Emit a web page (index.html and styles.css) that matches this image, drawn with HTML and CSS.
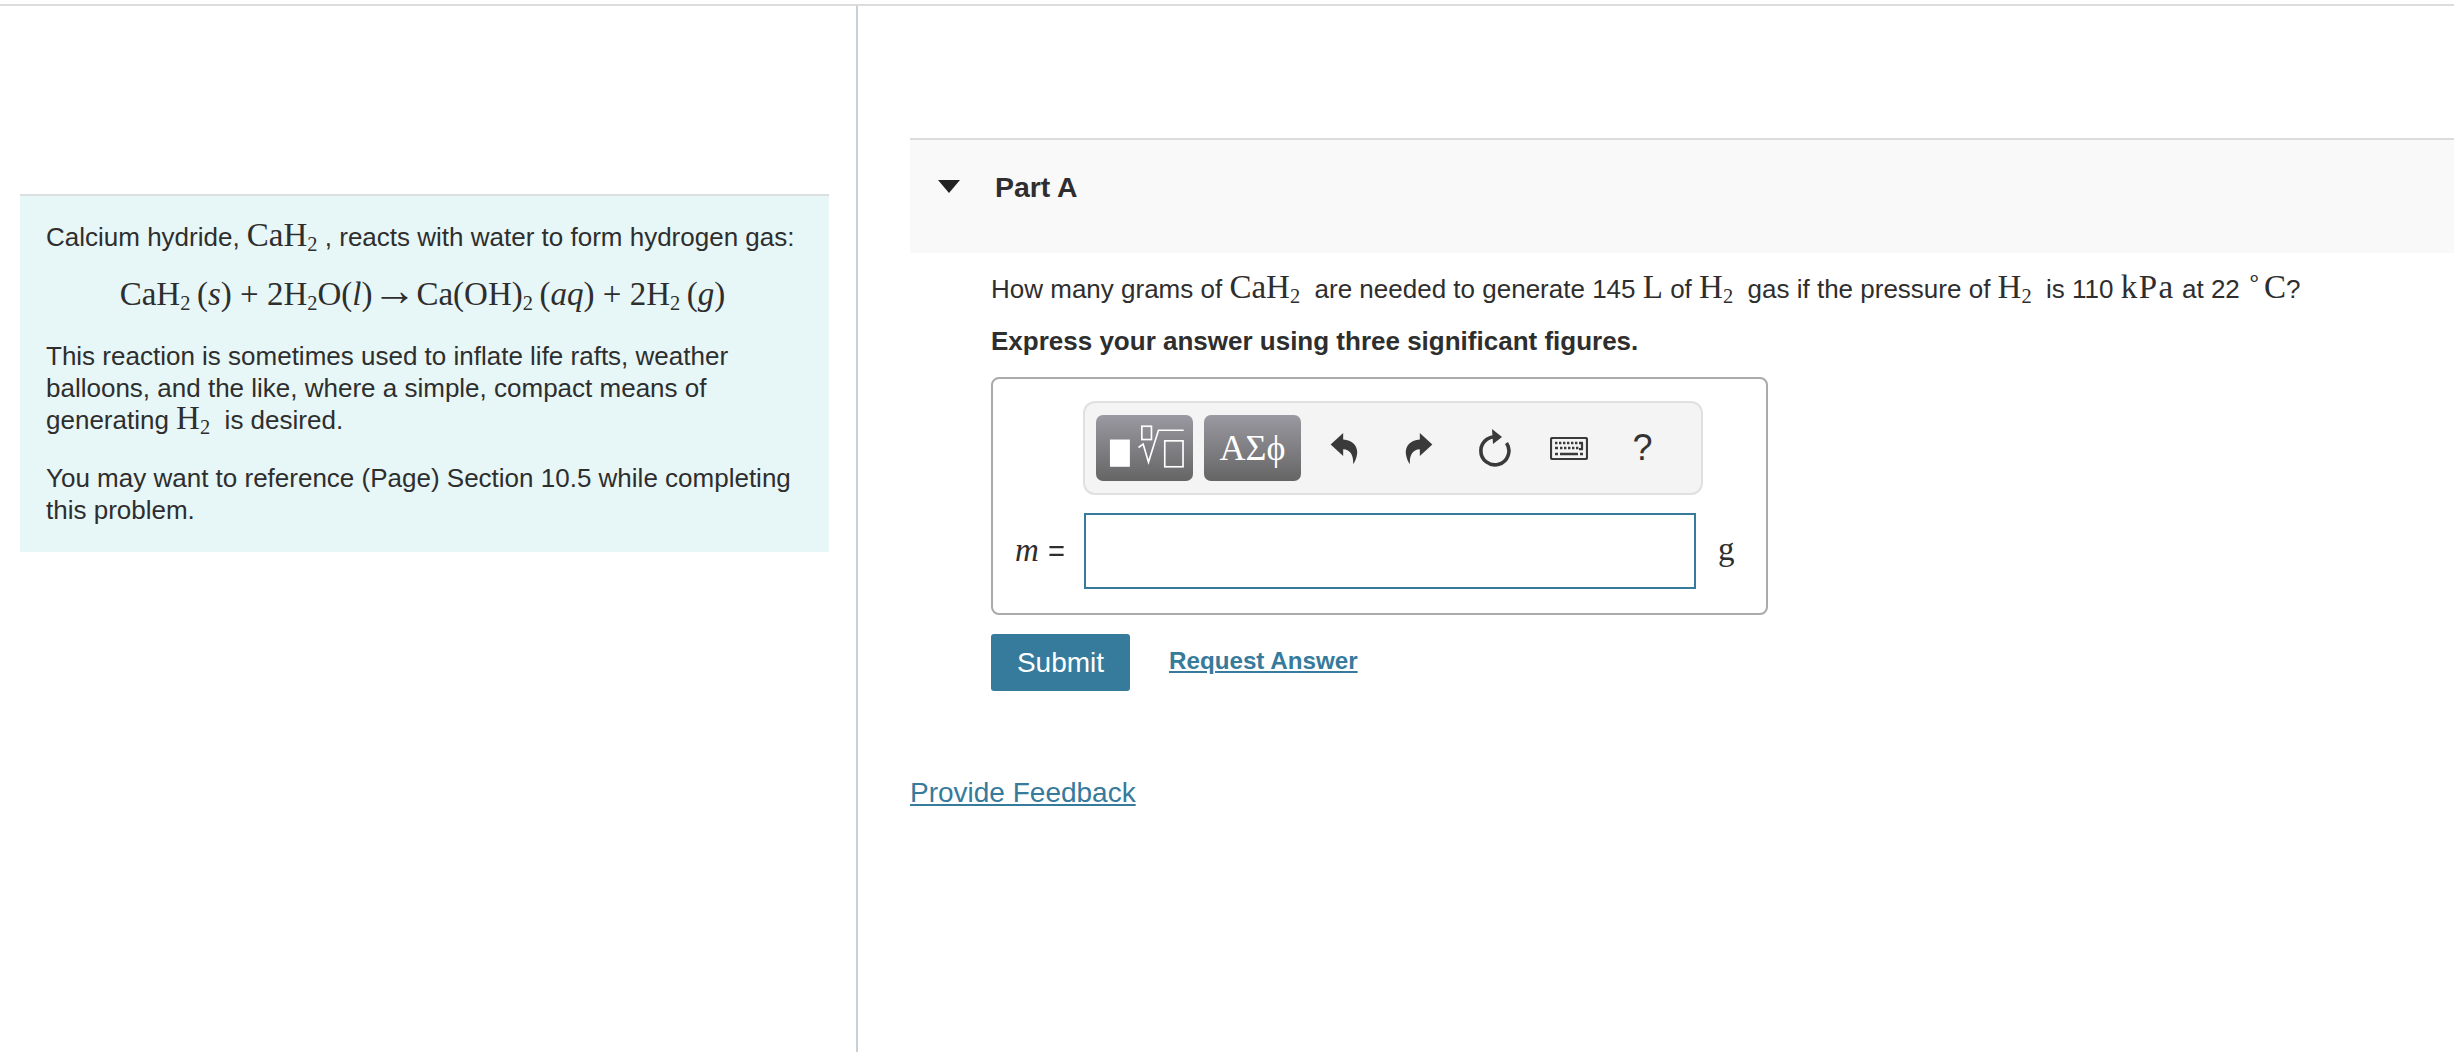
FILE: index.html
```html
<!DOCTYPE html>
<html lang="en">
<head>
    <meta charset="UTF-8">
    <title>Part A</title>
    <link rel="stylesheet" href="styles.css">
</head>
<body>
    <div class="page">
        <aside class="intro-col">
            <div class="intro">
                <p>Calcium hydride, <span class="math">CaH<sub>2</sub></span> , reacts with water to form hydrogen gas:</p>
                <p class="equation"><span class="math">CaH<sub>2</sub>&#8201;(<i>s</i>) + 2H<sub>2</sub>O(<i>l</i>)<span class="arrow">→</span>Ca(OH)<sub>2</sub>&#8201;(<i>aq</i>) + 2H<sub>2</sub>&#8201;(<i>g</i>)</span></p>
                <p>This reaction is sometimes used to inflate life rafts, weather balloons, and the like, where a simple, compact means of generating <span class="math">H<sub>2</sub></span>&nbsp; is desired.</p>
                <p class="last">You may want to reference (Page) Section 10.5 while completing this problem.</p>
            </div>
        </aside>

        <main class="content">
            <div class="part-header">
                <span class="caret"></span>
                <h2>Part A</h2>
            </div>

            <div class="part-body">
                <p class="question">How many grams of <span class="math">CaH<sub>2</sub></span>&nbsp; are needed to generate 145 <span class="math">L</span> of <span class="math">H<sub>2</sub></span>&nbsp; gas if the pressure of <span class="math">H<sub>2</sub></span>&nbsp; is 110 <span class="math wide">kPa</span> at 22 <span class="math"><sup>∘</sup>C</span>?</p>
                <p class="instruction">Express your answer using three significant figures.</p>

                <div class="answer-box">
                    <div class="toolbar">
                        <button class="tool-btn" type="button">
                            <svg class="templates" viewBox="48 45 292 197">
                                <rect x="90" y="118" width="60" height="82" fill="#fff"/>
                                <g fill="none" stroke="#fff" stroke-width="5">
                                    <rect x="186" y="78" width="29" height="40"/>
                                    <path d="M176 142 L190 132 L206 186 L236 90 H312"/>
                                    <rect x="255" y="122" width="55" height="78"/>
                                </g>
                            </svg>
                        </button>
                        <button class="tool-btn symbols" type="button">ΑΣϕ</button>

                        <span class="tool-icon">
                            <svg width="28" height="33" viewBox="60 60 85 100"><path class="ico" d="M62 98 L100 63 V83 C130 85 146 105 142 128 C140 142 135 150 130 158 C132 135 125 113 100 112 V133 Z"/></svg>
                        </span>
                        <span class="tool-icon">
                            <svg class="flip" width="28" height="33" viewBox="60 60 85 100"><path class="ico" d="M62 98 L100 63 V83 C130 85 146 105 142 128 C140 142 135 150 130 158 C132 135 125 113 100 112 V133 Z"/></svg>
                        </span>
                        <span class="tool-icon">
                            <svg width="34" height="38" viewBox="0 0 34 38">
                                <path d="M22.5 8.6 A14 14 0 1 0 29.5 14" fill="none" stroke="#3a3a3a" stroke-width="3.6"/>
                                <path class="ico" d="M15 0 L25 8 L16 15 Z"/>
                            </svg>
                        </span>
                        <span class="tool-icon">
                            <svg width="38" height="23" viewBox="0 0 38 23">
                                <rect x="1" y="1" width="36" height="21" rx="1.5" fill="none" stroke="#3a3a3a" stroke-width="2.2"/>
                                <path d="M5 6h2.4M9 6h2.4M13 6h2.4M17 6h2.4M21 6h2.4M25 6h2.4M29 6h4M5 11h3M10 11h2.4M14 11h2.4M18 11h2.4M22 11h2.4M26 11h2.4M5 17h3M10 17h18M30 17h3" stroke="#3a3a3a" stroke-width="2.6" fill="none"/>
                                <path d="M32 6v6.2H29" stroke="#3a3a3a" stroke-width="2.2" fill="none"/>
                            </svg>
                        </span>
                        <span class="tool-icon help">?</span>
                    </div>

                    <div class="answer-row">
                        <span class="answer-label"><i class="math">m</i> <span class="equals">=</span></span>
                        <input class="answer-input" type="text" aria-label="m">
                        <span class="math unit">g</span>
                    </div>
                </div>

                <div class="actions">
                    <button class="submit" type="button">Submit</button>
                    <a class="request" href="#">Request Answer</a>
                </div>
            </div>

            <a class="feedback" href="#">Provide Feedback</a>
        </main>
    </div>
</body>
</html>
```

FILE: styles.css
```css
* {
    box-sizing: border-box;
}

body {
    margin: 0;
    background-color: #fff;
    color: #2e2e2e;
    font-family: "Liberation Sans", Arial, sans-serif;
    font-size: 26px;
    line-height: 32px;
}

p {
    margin: 0;
}

.page {
    display: flex;
    height: 1052px;
    border-top: 2px solid #dcdcdc;
    margin-top: 4px;
    overflow: hidden;
}

/* columna izquierda */
.intro-col {
    flex: 0 0 858px;
    padding: 188px 27px 0 20px;
    border-right: 2px solid #c8d0d8;
}

.intro {
    height: 358px;
    padding: 25px 26px 0;
    background-color: #e7f6f6;
    border-top: 2px solid #dcdfdf;
}

.intro p {
    margin-bottom: 26px;
}

.intro .equation {
    margin-top: 27px;
    margin-bottom: 28px;
    padding-right: 4px;
    text-align: center;
}

.math {
    font-family: "Liberation Serif", "Times New Roman", serif;
    font-size: 33px;
    line-height: 0;
}

.math sub {
    font-size: 0.62em;
    line-height: 0;
    vertical-align: -0.25em;
}

.math sup {
    font-size: 0.7em;
    line-height: 0;
    vertical-align: 0.5em;
    margin-right: 3px;
}

.math .arrow {
    font-size: 44px;
}

.wide {
    letter-spacing: 1.5px;
}

/* columna derecha */
.content {
    flex: 1;
    min-width: 0;
    padding: 132px 0 0 52px;
}

.part-header {
    display: flex;
    align-items: flex-start;
    height: 115px;
    padding: 28px 0 0 28px;
    background-color: #f9f9f9;
    border-top: 2px solid #dcdcdc;
}

.caret {
    width: 0;
    height: 0;
    margin-top: 12px;
    border-left: 11px solid transparent;
    border-right: 11px solid transparent;
    border-top: 13px solid #222;
}

.part-header h2 {
    margin: 3px 0 0 35px;
    font-size: 28.4px;
    line-height: 32px;
    font-weight: bold;
}

.part-body {
    padding: 20px 0 0 81px;
}

.question {
    white-space: nowrap;
}

.instruction {
    margin-top: 20px;
    font-weight: bold;
}

.answer-box {
    width: 777px;
    height: 238px;
    margin-top: 20px;
    padding: 22px 0 0 90px;
    border: 2px solid #aaa;
    border-radius: 8px;
}

.toolbar {
    display: flex;
    align-items: center;
    width: 620px;
    height: 94px;
    padding-left: 11px;
    background-color: #f4f4f4;
    border: 2px solid #e0e0e0;
    border-radius: 12px;
}

.tool-btn {
    flex: 0 0 97px;
    height: 66px;
    margin-right: 11px;
    padding: 0;
    border: 0;
    border-radius: 7px;
    background: linear-gradient(#9b99a1, #656565);
    color: #fff;
}

.templates {
    display: block;
    width: 97px;
    height: 66px;
}

.symbols {
    margin-right: 5px;
    font-family: "Liberation Serif", serif;
    font-size: 36px;
}

.tool-icon {
    display: flex;
    flex: 0 0 75px;
    justify-content: center;
    align-items: center;
}

.ico {
    fill: #3a3a3a;
}

.flip {
    transform: scaleX(-1);
}

.help {
    margin-left: -1px;
    font-size: 36px;
    color: #333;
}

.answer-row {
    display: flex;
    align-items: center;
    margin: 18px 0 0 -68px;
}

.answer-label {
    flex: 0 0 69px;
    font-size: 26px;
    white-space: nowrap;
}

.equals {
    margin-left: 2px;
    font-size: 29px;
}

.answer-input {
    width: 612px;
    height: 76px;
    padding: 0;
    background-color: #fff;
    border: 2px solid #367a9c;
    border-radius: 0;
    outline: none;
}

.unit {
    margin-left: 22px;
    padding-bottom: 4px;
}

.actions {
    display: flex;
    align-items: flex-start;
    margin-top: 19px;
}

.submit {
    width: 139px;
    height: 57px;
    padding: 0;
    background-color: #367a9c;
    border: 0;
    border-radius: 3px;
    color: #fff;
    font-family: "Liberation Sans", Arial, sans-serif;
    font-size: 28px;
}

.request {
    margin: 11px 0 0 39px;
    color: #367a9c;
    font-size: 24.2px;
    font-weight: bold;
}

.feedback {
    display: inline-block;
    margin-top: 86px;
    color: #367a9c;
    font-size: 28px;
}
```
